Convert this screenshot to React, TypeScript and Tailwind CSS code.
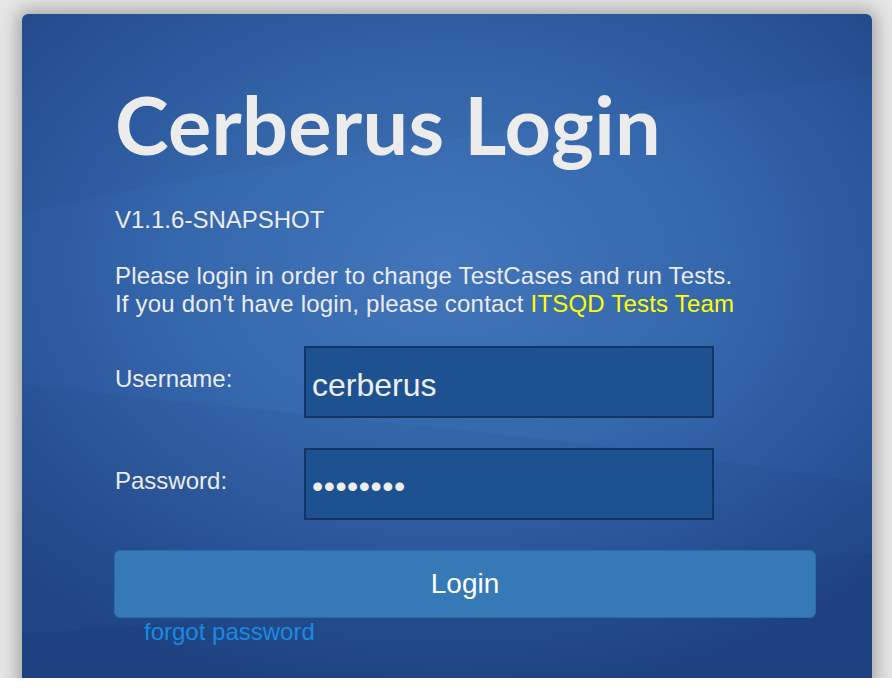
import React from "react";

export default function App() {
  return (
    <div className="h-[678px] overflow-hidden bg-[#e6e6e6] font-['Liberation_Sans',Arial,sans-serif]">
      <div className="relative ml-[22px] mt-[14px] h-[700px] w-[850px] overflow-hidden rounded-t-[6px] bg-[radial-gradient(ellipse_72%_62%_at_50%_36%,#4275ba_0%,#3567ad_45%,#2a559a_75%,#21488a_100%)] shadow-[0_0_18px_4px_rgba(0,0,0,0.3)]">
        {/* swooshes */}
        <svg className="absolute inset-0 h-full w-full" viewBox="0 0 850 700" preserveAspectRatio="none">
          <path d="M0 200 C 200 150, 500 120, 850 60 L 850 0 L 0 0 Z" fill="rgba(0,0,0,0.025)" />
          <path d="M0 370 C 250 400, 550 420, 850 470 L 850 700 L 0 700 Z" fill="rgba(0,0,0,0.03)" />
          <path d="M0 620 C 300 600, 600 560, 850 540 L 850 700 L 0 700 Z" fill="rgba(0,0,0,0.03)" />
        </svg>

        <div className="relative pl-[93px] pr-[56px] pt-[62px] text-[#ececec]">
          <h1 className="font-['Lato',sans-serif] text-[81px] font-bold leading-[96px] tracking-[0.3px]">
            Cerberus Login
          </h1>

          <p className="mt-[34px] text-[24px] leading-[28px]">V1.1.6-SNAPSHOT</p>

          <p className="mt-[28px] text-[24px] leading-[28px] tracking-[0.2px]">
            Please login in order to change TestCases and run Tests.
            <br />
            If you don't have login, please contact{" "}
            <a className="text-[#ffff00]">ITSQD Tests Team</a>
          </p>

          <div className="mt-[28px] flex flex-col gap-[30px]">
            <div className="flex items-start">
              <label className="w-[189px] pt-[19px] text-[24px] leading-[28px]">Username:</label>
              <div className="flex h-[72px] w-[410px] items-center border-2 border-[#123564] bg-[#1e5190] px-[6px] pt-[6px] text-[32px] text-[#eeeeee]">
                cerberus
              </div>
            </div>
            <div className="flex items-start">
              <label className="w-[189px] pt-[19px] text-[24px] leading-[28px]">Password:</label>
              <div className="flex h-[72px] w-[410px] items-center border-2 border-[#123564] bg-[#1e5190] px-[6px] pt-[4px] text-[32px] tracking-[0.5px] text-[#eeeeee]">
                ••••••••
              </div>
            </div>
          </div>

          <button className="-ml-px mt-[30px] flex h-[68px] w-[702px] items-center justify-center rounded-[6px] border border-[#2e6aa9] bg-[#3579b6] text-[28px] text-white">
            Login
          </button>
          <a className="ml-[29px] block text-[24px] leading-[28px] text-[#1a8ae0]">forgot password</a>
        </div>
      </div>
    </div>
  );
}
